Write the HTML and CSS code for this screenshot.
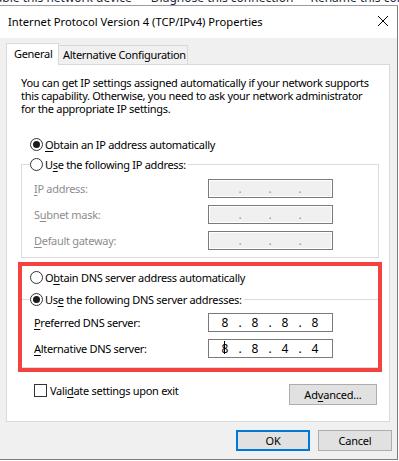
FILE: index.html
```html
<!DOCTYPE html>
<html lang="en">
<head>
  <meta charset="UTF-8">
  <title>Internet Protocol Version 4 (TCP/IPv4) Properties</title>
  <link rel="stylesheet" href="styles.css">
</head>
<body>

  <div class="backdrop">
    <span class="bd-1">Disable this network device</span>
    <span class="bd-2">Diagnose this connection</span>
    <span class="bd-3">Rename this connection</span>
  </div>

  <div class="dialog">
    <div class="titlebar">
      <span class="title">Internet Protocol Version 4 (TCP/IPv4) Properties</span>
      <svg class="close" width="10" height="10" viewBox="0 0 10 10">
        <path d="M0 0L10 10M10 0L0 10" stroke="#000" stroke-width="1" fill="none"/>
      </svg>
    </div>

    <div class="body">
      <div class="tabs">
        <div class="tab active">General</div>
        <div class="tab">Alternative Configuration</div>
      </div>

      <div class="panel">
        <p class="desc">
          You can get IP settings assigned automatically if your network supports<br>
          this capability. Otherwise, you need to ask your network administrator<br>
          for the appropriate IP settings.
        </p>

        <div class="option first">
          <span class="radio checked"></span>
          <span><u>O</u>btain an IP address automatically</span>
        </div>

        <fieldset class="group ip">
          <legend class="option">
            <span class="radio"></span>
            <span>U<u>s</u>e the following IP address:</span>
          </legend>
          <div class="fields disabled">
            <span><u>I</u>P address:</span>
            <div class="ipbox"><i></i><b>.</b><i></i><b>.</b><i></i><b>.</b><i></i></div>
            <span>S<u>u</u>bnet mask:</span>
            <div class="ipbox"><i></i><b>.</b><i></i><b>.</b><i></i><b>.</b><i></i></div>
            <span><u>D</u>efault gateway:</span>
            <div class="ipbox"><i></i><b>.</b><i></i><b>.</b><i></i><b>.</b><i></i></div>
          </div>
        </fieldset>

        <div class="option dns-auto">
          <span class="radio"></span>
          <span>O<u>b</u>tain DNS server address automatically</span>
        </div>

        <fieldset class="group dns">
          <legend class="option">
            <span class="radio checked"></span>
            <span>Us<u>e</u> the following DNS server addresses:</span>
          </legend>
          <div class="fields">
            <span><u>P</u>referred DNS server:</span>
            <div class="ipbox"><i>8</i><b>.</b><i>8</i><b>.</b><i>8</i><b>.</b><i>8</i></div>
            <span><u>A</u>lternative DNS server:</span>
            <div class="ipbox"><i class="caret">8</i><b>.</b><i>8</i><b>.</b><i>4</i><b>.</b><i>4</i></div>
          </div>
        </fieldset>

        <div class="bottom-row">
          <label class="check">
            <span class="box"></span>
            <span>Vali<u>d</u>ate settings upon exit</span>
          </label>
          <button class="btn advanced">Ad<u>v</u>anced...</button>
        </div>

        <div class="highlight"></div>
      </div>

      <div class="footer">
        <button class="btn default">OK</button>
        <button class="btn">Cancel</button>
      </div>
    </div>
  </div>

</body>
</html>
```

FILE: styles.css
```css
body {
  margin: 0;
  width: 399px;
  height: 461px;
  overflow: hidden;
  background: #fff;
  font-family: 'Noto Sans', sans-serif;
  font-size: 11px;
  color: #000;
}
u {
  text-decoration-thickness: 1px;
  text-underline-offset: 2px;
}

.backdrop {
  height: 5px;
  overflow: hidden;
  white-space: nowrap;
  color: #1b2a3a;
  font-size: 12px;
}
.backdrop span {
  display: inline-block;
  line-height: 14px;
  margin-top: -9px;
  vertical-align: top;
}
.bd-1 { margin-left: -22px; }
.bd-2 { margin-left: 16px; }
.bd-3 { margin-left: 14px; }

.dialog {
  width: 397px;
  height: 453px;
  border-top: 1px solid #9c9c9c;
  border-right: 1px solid #7d7d7d;
  border-bottom: 1px solid #7d7d7d;
  background: #f0f0f0;
}
.titlebar {
  height: 32px;
  background: #fff;
  display: flex;
  align-items: center;
  justify-content: space-between;
  padding: 0 9px 0 8px;
}
.title {
  font-size: 11.2px;
  margin-top: -1px;
}
.close {
  margin-top: -2px;
}

.body {
  padding: 5px 5px 0 6px;
  letter-spacing: -0.3px;
}
.tabs {
  display: flex;
  align-items: flex-end;
  height: 21px;
  position: relative;
  z-index: 1;
  white-space: nowrap;
}
.tab {
  height: 19px;
  line-height: 18px;
  box-sizing: border-box;
  border-top: 1px solid #d9d9d9;
  border-right: 1px solid #d9d9d9;
  padding: 0 0 0 4px;
  background: #f0f0f0;
  width: 129px;
}
.tab.active {
  width: 53px;
  height: 22px;
  margin-bottom: -1px;
  line-height: 20px;
  border-left: 1px solid #d9d9d9;
  background: #fff;
  padding-left: 7px;
}

.panel {
  position: relative;
  box-sizing: border-box;
  width: 384px;
  height: 358px;
  border: 1px solid #d9d9d9;
  background: #fff;
}
.desc {
  margin: 0;
  padding: 11px 0 0 14px;
  line-height: 13px;
  white-space: nowrap;
}

.option {
  display: flex;
  align-items: center;
  gap: 2px;
  height: 17px;
  white-space: nowrap;
}
.option.first {
  margin: 21px 0 0 23px;
}
.radio {
  width: 13px;
  height: 13px;
  box-sizing: border-box;
  border: 1px solid #333;
  border-radius: 50%;
  background: #fff;
  display: flex;
  align-items: center;
  justify-content: center;
}
.radio.checked::after {
  content: "";
  width: 7px;
  height: 7px;
  border-radius: 50%;
  background: #1a1a1a;
}

.group {
  margin: 3px 0 0 14px;
  width: 358px;
  box-sizing: border-box;
  border: 1px solid #dcdcdc;
  padding: 0 0 7px 8px;
  min-width: 0;
}
.group legend {
  padding: 0 2px 0 0;
}
.fields {
  display: grid;
  grid-template-columns: 174px 125px;
  row-gap: 7px;
  align-items: center;
  margin: 6px 0 0 4px;
  white-space: nowrap;
}
.fields.disabled {
  color: #8d8d8d;
}
.ipbox {
  display: flex;
  height: 19px;
  box-sizing: border-box;
  border: 1px solid #7a7a7a;
  background: #fff;
  padding-left: 4px;
  align-items: center;
  font-size: 12px;
  letter-spacing: 0;
}
.ipbox i {
  font-style: normal;
  width: 24px;
  text-align: center;
}
.ipbox b {
  font-weight: normal;
  width: 6px;
  text-align: center;
}
.disabled .ipbox {
  background: #f0f0f0;
  box-shadow: inset 0 0 0 1px #fff;
}
.disabled .ipbox b {
  color: #9a9a9a;
}
.caret {
  position: relative;
}
.caret::before {
  content: "";
  position: absolute;
  left: 11px;
  top: 1px;
  width: 1px;
  height: 13px;
  background: #000;
}

.dns-auto {
  margin: 11px 0 0 23px;
}
.group.dns {
  margin-top: 5px;
  padding-bottom: 9px;
}
.group.dns .fields {
  margin-top: 5px;
}

.bottom-row {
  display: flex;
  justify-content: space-between;
  align-items: flex-start;
  margin: 16px 12px 0 27px;
}
.check {
  display: flex;
  align-items: center;
  gap: 3px;
  height: 13px;
}
.box {
  width: 13px;
  height: 13px;
  box-sizing: border-box;
  border: 1px solid #333;
  background: #fff;
}
.btn {
  font-family: 'Noto Sans', sans-serif;
  font-size: 11px;
  letter-spacing: -0.2px;
  color: #000;
  background: #e1e1e1;
  border: 1px solid #adadad;
  width: 74px;
  height: 21px;
  padding: 0;
  box-sizing: border-box;
}
.btn.advanced {
  width: 88px;
}
.btn.default {
  border: 2px solid #0078d7;
}

.highlight {
  position: absolute;
  left: 11px;
  top: 197px;
  width: 364px;
  height: 110px;
  box-sizing: border-box;
  border: 4px solid #f4433c;
}

.footer {
  display: flex;
  justify-content: flex-end;
  gap: 8px;
  padding-top: 8px;
}
```
